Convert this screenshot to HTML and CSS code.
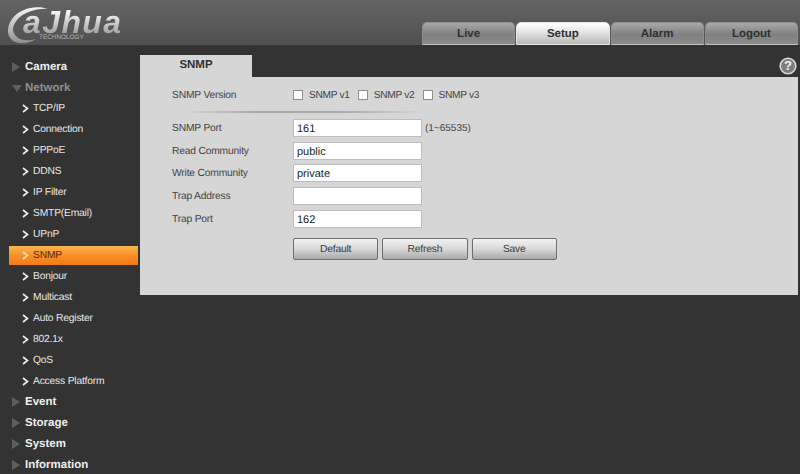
FILE: index.html
```html
<!DOCTYPE html>
<html lang="en">
<head>
<meta charset="utf-8">
<title>SNMP</title>
<link rel="stylesheet" href="styles.css">
</head>
<body>
<header class="header">
  <div class="logo">
    <svg class="logo-ring" width="50" height="46" viewBox="0 0 50 46"><defs><linearGradient id="ring" x1="0" y1="0" x2="0" y2="1"><stop offset="0" stop-color="#f6f6f6"/><stop offset="1" stop-color="#8e8e8e"/></linearGradient></defs><path d="M48 9C37 5 20 8 12 19C5 29 7 41 19 43C25 44 31 42 36 39C29 41 20 41 16 36C11 31 13 25 17 20C24 12 37 8 48 9Z" fill="url(#ring)"/></svg>
    <span class="logo-word">a<span class="logo-gap">J</span>hua</span>
    <span class="logo-sub">TECHNOLOGY</span>
  </div>
  <nav class="tabs">
    <a class="tab">Live</a>
    <a class="tab tab-active">Setup</a>
    <a class="tab">Alarm</a>
    <a class="tab">Logout</a>
  </nav>
</header>
<div class="main">
  <aside class="side">
    <div class="group"><span class="tri"></span>Camera</div>
    <div class="group group-open"><span class="tri tri-down"></span>Network</div>
    <div class="item"><svg class="chev" width="7" height="9" viewBox="0 0 7 9"><path d="M1 1L5.5 4.5L1 8" /></svg>TCP/IP</div>
    <div class="item"><svg class="chev" width="7" height="9" viewBox="0 0 7 9"><path d="M1 1L5.5 4.5L1 8" /></svg>Connection</div>
    <div class="item"><svg class="chev" width="7" height="9" viewBox="0 0 7 9"><path d="M1 1L5.5 4.5L1 8" /></svg>PPPoE</div>
    <div class="item"><svg class="chev" width="7" height="9" viewBox="0 0 7 9"><path d="M1 1L5.5 4.5L1 8" /></svg>DDNS</div>
    <div class="item"><svg class="chev" width="7" height="9" viewBox="0 0 7 9"><path d="M1 1L5.5 4.5L1 8" /></svg>IP Filter</div>
    <div class="item"><svg class="chev" width="7" height="9" viewBox="0 0 7 9"><path d="M1 1L5.5 4.5L1 8" /></svg>SMTP(Email)</div>
    <div class="item"><svg class="chev" width="7" height="9" viewBox="0 0 7 9"><path d="M1 1L5.5 4.5L1 8" /></svg>UPnP</div>
    <div class="item item-active"><svg class="chev" width="7" height="9" viewBox="0 0 7 9"><path d="M1 1L5.5 4.5L1 8" /></svg>SNMP</div>
    <div class="item"><svg class="chev" width="7" height="9" viewBox="0 0 7 9"><path d="M1 1L5.5 4.5L1 8" /></svg>Bonjour</div>
    <div class="item"><svg class="chev" width="7" height="9" viewBox="0 0 7 9"><path d="M1 1L5.5 4.5L1 8" /></svg>Multicast</div>
    <div class="item"><svg class="chev" width="7" height="9" viewBox="0 0 7 9"><path d="M1 1L5.5 4.5L1 8" /></svg>Auto Register</div>
    <div class="item"><svg class="chev" width="7" height="9" viewBox="0 0 7 9"><path d="M1 1L5.5 4.5L1 8" /></svg>802.1x</div>
    <div class="item"><svg class="chev" width="7" height="9" viewBox="0 0 7 9"><path d="M1 1L5.5 4.5L1 8" /></svg>QoS</div>
    <div class="item"><svg class="chev" width="7" height="9" viewBox="0 0 7 9"><path d="M1 1L5.5 4.5L1 8" /></svg>Access Platform</div>
    <div class="group"><span class="tri"></span>Event</div>
    <div class="group"><span class="tri"></span>Storage</div>
    <div class="group"><span class="tri"></span>System</div>
    <div class="group"><span class="tri"></span>Information</div>
  </aside>
  <section class="content">
    <div class="content-top">
      <div class="page-tab">SNMP</div>
      <svg class="help" width="18" height="18" viewBox="0 0 18 18"><circle cx="9" cy="9" r="7.8" fill="#7e7e7e" stroke="#d8d8d8" stroke-width="1.6"/><text x="9" y="13.4" text-anchor="middle" class="help-q">?</text></svg>
    </div>
    <div class="panel">
      <div class="row row-version">
        <span class="label">SNMP Version</span>
        <div class="checks">
          <span class="check"><span class="box"></span><span class="check-text">SNMP v1</span></span>
          <span class="check"><span class="box"></span><span class="check-text">SNMP v2</span></span>
          <span class="check"><span class="box"></span><span class="check-text">SNMP v3</span></span>
        </div>
      </div>
      <div class="divider"></div>
      <div class="row"><span class="label">SNMP Port</span><span class="field">161</span><span class="hint">(1~65535)</span></div>
      <div class="row"><span class="label">Read Community</span><span class="field">public</span></div>
      <div class="row"><span class="label">Write Community</span><span class="field">private</span></div>
      <div class="row"><span class="label">Trap Address</span><span class="field"></span></div>
      <div class="row"><span class="label">Trap Port</span><span class="field">162</span></div>
      <div class="buttons">
        <span class="btn">Default</span>
        <span class="btn">Refresh</span>
        <span class="btn">Save</span>
      </div>
    </div>
  </section>
</div>
</body>
</html>
```
FILE: styles.css
```css
* { box-sizing: border-box; }
html, body { margin: 0; padding: 0; }
body {
  width: 800px;
  height: 474px;
  overflow: hidden;
  background: #333333;
  font-family: "Liberation Sans", Arial, sans-serif;
  font-size: 10px;
  color: #3c3c3c;
  text-rendering: geometricPrecision;
}
.header {
  height: 45px;
  background: linear-gradient(#646464, #585858 60%, #505050);
  display: flex;
  justify-content: space-between;
  align-items: flex-end;
  padding-right: 2px;
}
.logo { position: relative; width: 130px; height: 45px; }
.logo-ring { position: absolute; left: 0; top: 0; }
.logo-word {
  position: absolute;
  left: 23px;
  top: 9.5px;
  height: 24px;
  font: italic bold 32px/24px "Liberation Sans", sans-serif;
  letter-spacing: 1.4px;
  background: linear-gradient(#f4f4f4 10%, #a0a0a0 100%);
  -webkit-background-clip: text;
  background-clip: text;
  color: transparent;
}
.logo-gap { margin: 0; }
.logo-sub {
  position: absolute;
  left: 39px;
  top: 34px;
  font-size: 6.4px;
  line-height: 8px;
  color: #b0b0b0;
}
.tabs { display: flex; gap: 1px; }
.tab {
  width: 93.25px;
  height: 23px;
  border-radius: 5px 5px 0 0;
  background: linear-gradient(#a8a8a8, #808080 55%, #8a8a8a);
  border: 1px solid #8f8f8f;
  border-bottom: 1px solid #c2c2c2;
  font-size: 11.5px;
  font-weight: bold;
  line-height: 22px;
  text-align: center;
  color: #303030;
}
.tab-active {
  background: linear-gradient(#ffffff, #e6e6e6 40%, #b9b9b9);
  border-color: #e4e4e4;
}
.main { display: flex; }
.side { width: 140px; padding-top: 11.6px; }
.group, .item { height: 20.95px; display: flex; align-items: center; }
.group {
  font-size: 11.5px;
  font-weight: bold;
  color: #eeeeee;
  padding-left: 12px;
}
.group-open { color: #8f8f8f; }
.tri {
  width: 0;
  height: 0;
  margin-right: 5px;
  border-left: 8px solid #5e5e5e;
  border-top: 5px solid transparent;
  border-bottom: 5px solid transparent;
}
.tri-down {
  border-left: 5px solid transparent;
  border-right: 5px solid transparent;
  border-top: 7px solid #5e5e5e;
  border-bottom: 0;
  margin-right: 3px;
}
.item {
  font-size: 10.3px;
  letter-spacing: -0.2px;
  color: #e6e6e6;
  padding-left: 22px;
}
.chev { margin-right: 4px; flex: none; }
.chev path { fill: none; stroke: #f2f2f2; stroke-width: 1.6; }
.item-active {
  margin: 1px 0 1px 9px;
  padding-left: 13px;
  width: 129px;
  height: 18.95px;
  background: linear-gradient(#f8b552, #fb8f26 50%, #f27a18);
  color: #5a2a08;
}
.item-active .chev path { stroke: #ffe0b0; }
.content { width: 658px; padding-top: 10px; }
.content-top {
  display: flex;
  justify-content: space-between;
  align-items: flex-start;
  height: 22px;
}
.page-tab {
  width: 112px;
  height: 22px;
  background: #d6d6d6;
  font-size: 11.5px;
  font-weight: bold;
  line-height: 20px;
  text-align: center;
  color: #333333;
}
.help { position: relative; top: 2px; left: -1px; }
.help-q { font: bold 13px "Liberation Sans", sans-serif; fill: #f4f4f4; }
.panel {
  height: 218px;
  background: #d6d6d6;
  padding: 9px 0 0 32px;
}
.row { display: flex; align-items: center; height: 22.6px; }
.row-version { height: 17px; }
.label { width: 121px; padding-top: 1px; color: #444444; font-size: 10.3px; letter-spacing: -0.2px; }
.checks { display: flex; gap: 8px; }
.check { display: flex; align-items: center; font-size: 10.2px; letter-spacing: -0.3px; color: #444444; }
.check-text { padding-top: 2px; }
.box {
  width: 10px;
  height: 10px;
  background: #ffffff;
  border: 1px solid #8e8e8e;
  margin-right: 6px;
}
.divider {
  height: 2px;
  width: 240px;
  margin: 8px 0 4px 12px;
  background: linear-gradient(90deg, #d6d6d6, #a8a8a8 30%, #a8a8a8 65%, #d6d6d6);
}
.field {
  width: 129px;
  height: 18px;
  background: #ffffff;
  border: 1px solid #bdbdbd;
  font-size: 11px;
  line-height: 18px;
  padding-left: 3px;
  color: #222222;
}
.hint { margin-left: 3px; padding-top: 1px; font-size: 10px; color: #444444; }
.buttons { display: flex; gap: 4px; margin: 8px 0 0 121px; }
.btn {
  width: 85.3px;
  height: 22px;
  border: 1px solid #6f6f6f;
  border-radius: 2px;
  background: linear-gradient(#f2f2f2, #d8d8d8 50%, #a8a8a8);
  font-size: 10.3px;
  letter-spacing: -0.2px;
  line-height: 21px;
  text-align: center;
  color: #3a3a3a;
}
```
